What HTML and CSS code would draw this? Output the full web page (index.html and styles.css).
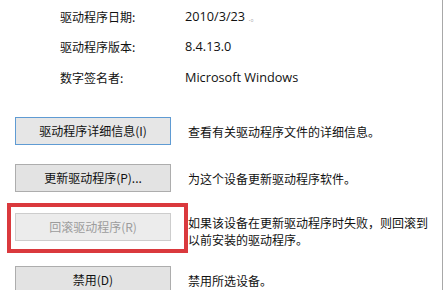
FILE: index.html
```html
<!DOCTYPE html>
<html lang="zh-CN">
<head>
<meta charset="utf-8">
<title>驱动程序</title>
<link rel="stylesheet" href="styles.css">
</head>
<body>
<div class="panel">
  <div class="info">
    <div class="info-row"><span class="label">驱动程序日期:</span><span class="value">2010/3/23 <span class="noise">.。</span></span></div>
    <div class="info-row"><span class="label">驱动程序版本:</span><span class="value">8.4.13.0</span></div>
    <div class="info-row"><span class="label">数字签名者:</span><span class="value">Microsoft Windows</span></div>
  </div>
  <div class="actions">
    <div class="action row-details">
      <button class="btn btn-focus">驱动程序详细信息(I)</button>
      <p class="desc">查看有关驱动程序文件的详细信息。</p>
    </div>
    <div class="action row-update">
      <button class="btn">更新驱动程序(P)...</button>
      <p class="desc">为这个设备更新驱动程序软件。</p>
    </div>
    <div class="action row-rollback highlighted">
      <button class="btn" disabled>回滚驱动程序(R)</button>
      <p class="desc">如果该设备在更新驱动程序时失败，则回滚到<br>以前安装的驱动程序。</p>
    </div>
    <div class="action row-disable">
      <button class="btn">禁用(D)</button>
      <p class="desc">禁用所选设备。</p>
    </div>
  </div>
</div>
</body>
</html>
```

FILE: styles.css
```css
html, body {
  margin: 0;
  padding: 0;
  background: #ffffff;
  overflow: hidden;
}

body {
  font-family: "Noto Sans CJK SC", "Noto Sans", sans-serif;
  font-size: 12px;
  color: #111111;
}

.panel {
  width: 442px;
  height: 290px;
  border-right: 1px solid #a8a8a8;
  box-sizing: content-box;
  overflow: hidden;
}

.info {
  display: flex;
  flex-direction: column;
  gap: 13.5px;
  padding: 7.5px 0 0 60px;
}

.info-row {
  display: grid;
  grid-template-columns: 125px auto;
  line-height: 17px;
  height: 17px;
}

.value {
  font-family: "Open Sans", "Noto Sans CJK SC", sans-serif;
  font-size: 12.7px;
}

.noise {
  color: #b0b0b0;
  font-size: 8px;
}

.actions {
  display: flex;
  flex-direction: column;
  padding-left: 15px;
  margin-top: 31px;
}

.action {
  display: flex;
  align-items: flex-start;
  gap: 17px;
  position: relative;
  height: 28px;
}

.row-update { margin-top: 19px; }
.row-rollback { margin-top: 21px; }
.row-disable { margin-top: 25px; }

.btn {
  width: 156px;
  height: 28px;
  box-sizing: border-box;
  border: 1px solid #adadad;
  background: #e3e3e3;
  font-family: "Noto Sans CJK SC", sans-serif;
  font-size: 12px;
  color: #111111;
  padding: 0;
  flex-shrink: 0;
}

.btn-focus {
  border-color: #5f9bd3;
  background: #e6e6e6;
}

.btn:disabled {
  border-color: #cdcdcd;
  background: #ececec;
  color: #9c9c9c;
}

.desc {
  margin: 0;
  line-height: 17px;
  padding-top: 6px;
  color: #111111;
}

.row-rollback .desc { padding-top: 1px; }

.highlighted::after {
  content: "";
  position: absolute;
  left: -8px;
  top: -10px;
  width: 181px;
  height: 50px;
  box-sizing: border-box;
  border: 4px solid #da393d;
  pointer-events: none;
}
```
